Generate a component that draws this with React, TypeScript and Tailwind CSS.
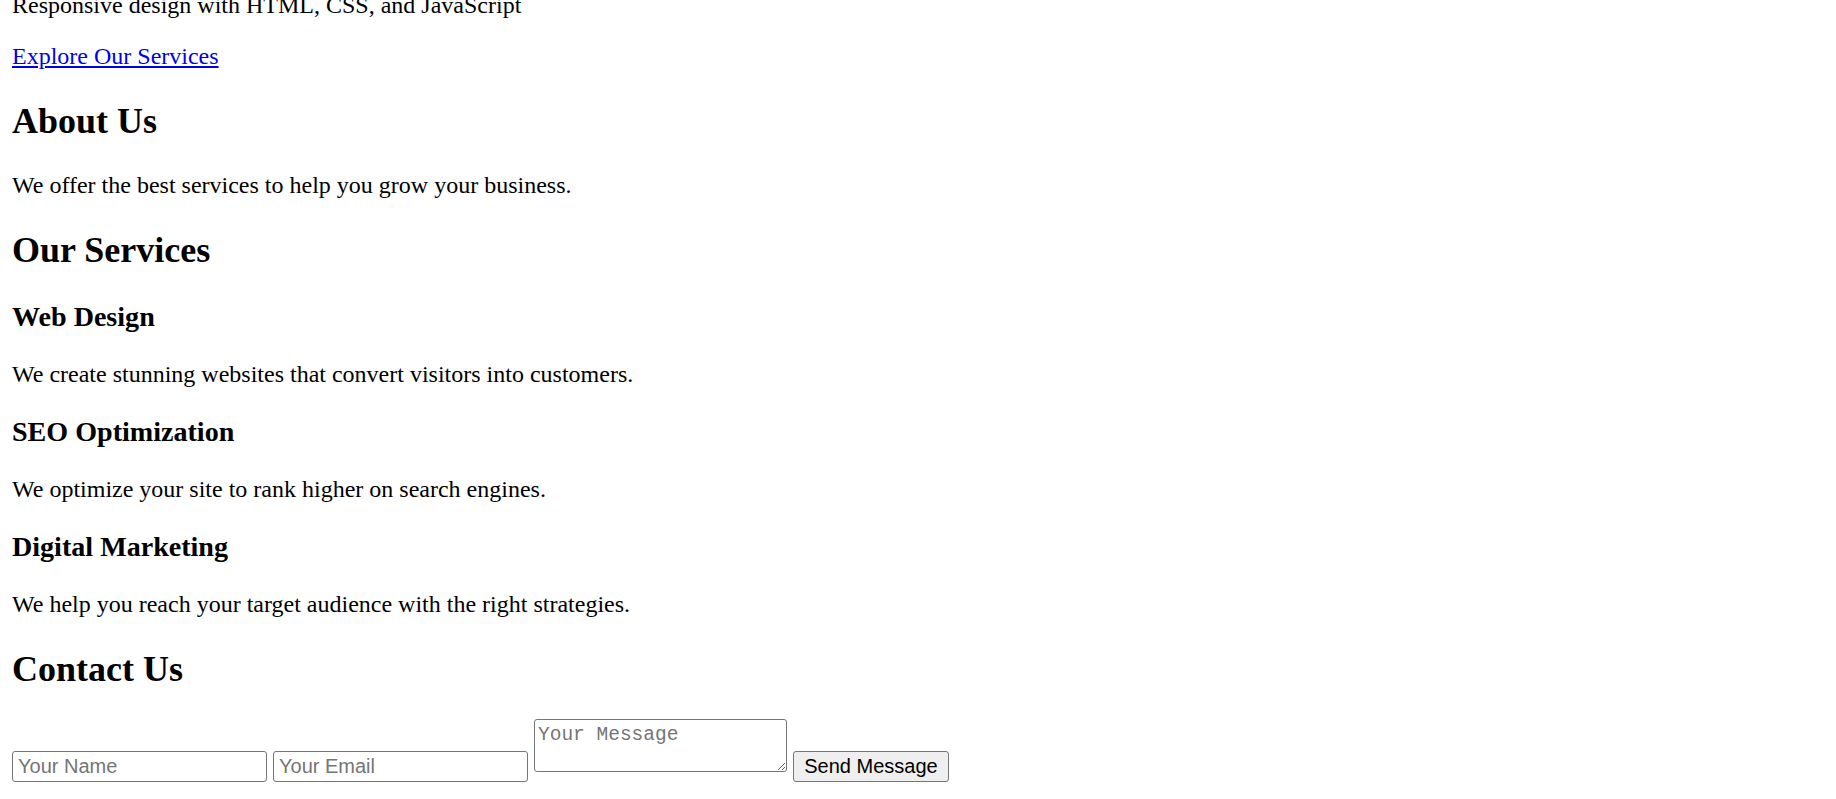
import React from "react";

export default function App() {
  return (
    <div className="min-h-[799px] bg-white px-[12px] font-['Liberation_Serif','Times_New_Roman',serif] text-black overflow-hidden">
      <div className="-mt-[8px]">
        <p className="text-[24px] leading-[normal] mb-[24px]">Responsive design with HTML, CSS, and JavaScript</p>
        <p className="text-[24px] leading-[normal] my-[24px]">
          <a href="#services" className="text-[#0000ee] underline">Explore Our Services</a>
        </p>
        <h2 className="text-[36px] font-bold leading-[normal] my-[29.88px]">About Us</h2>
        <p className="text-[24px] leading-[normal] my-[24px]">We offer the best services to help you grow your business.</p>
        <h2 className="text-[36px] font-bold leading-[normal] my-[29.88px]">Our Services</h2>
        <h3 className="text-[28.08px] font-bold leading-[normal] my-[28.08px]">Web Design</h3>
        <p className="text-[24px] leading-[normal] my-[24px]">We create stunning websites that convert visitors into customers.</p>
        <h3 className="text-[28.08px] font-bold leading-[normal] my-[28.08px]">SEO Optimization</h3>
        <p className="text-[24px] leading-[normal] my-[24px]">We optimize your site to rank higher on search engines.</p>
        <h3 className="text-[28.08px] font-bold leading-[normal] my-[28.08px]">Digital Marketing</h3>
        <p className="text-[24px] leading-[normal] my-[24px]">We help you reach your target audience with the right strategies.</p>
        <h2 className="text-[36px] font-bold leading-[normal] mt-[29.88px] mb-[29px]">Contact Us</h2>
        <form className="flex items-end gap-[6px]" onSubmit={(e) => e.preventDefault()}>
          <input
            type="text"
            placeholder="Your Name"
            className="w-[255px] h-[31px] border border-[#767676] rounded-[3px] px-[5px] font-['Liberation_Sans',Arial,sans-serif] text-[20px] leading-[normal] placeholder:text-[#757575] bg-white"
          />
          <input
            type="email"
            placeholder="Your Email"
            className="w-[255px] h-[31px] border border-[#767676] rounded-[3px] px-[5px] font-['Liberation_Sans',Arial,sans-serif] text-[20px] leading-[normal] placeholder:text-[#757575] bg-white"
          />
          <textarea
            placeholder="Your Message"
            className="w-[253px] h-[53px] mb-[10px] border border-[#767676] rounded-[3px] px-[3px] py-[4px] font-['Liberation_Mono','DejaVu_Sans_Mono',monospace] text-[19.5px] leading-[normal] placeholder:text-[#757575] bg-white resize"
          />
          <button
            type="submit"
            className="w-[156px] h-[31px] border border-[#767676] rounded-[3px] bg-[#efefef] font-['Liberation_Sans',Arial,sans-serif] text-[20px] leading-[normal] text-black"
          >
            Send Message
          </button>
        </form>
      </div>
    </div>
  );
}
